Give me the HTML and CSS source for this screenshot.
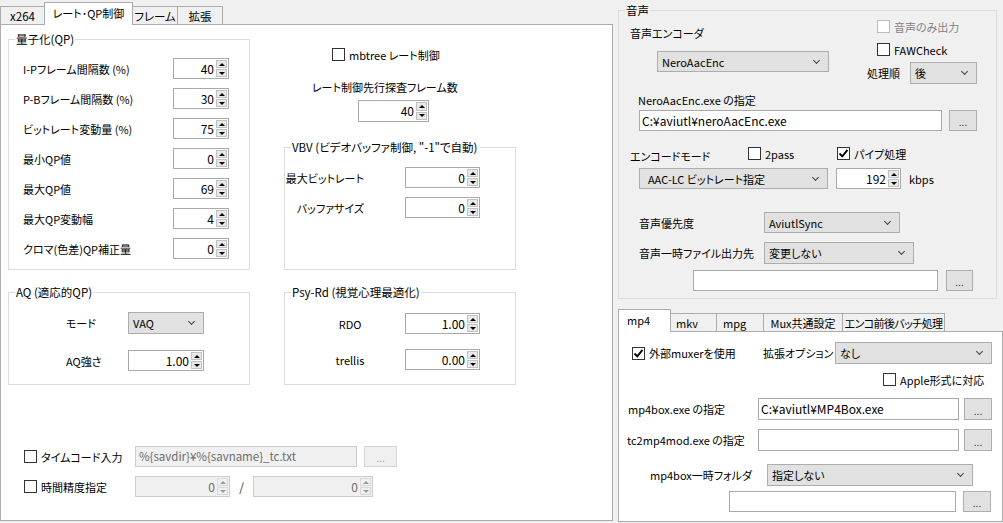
FILE: index.html
```html
<!DOCTYPE html>
<html lang="ja">
<head>
<meta charset="utf-8">
<title>x264 settings</title>
<link rel="stylesheet" href="styles.css">
</head>
<body>
<div class="root">
  <div class="left">
    <div class="tabstrip">
      <div class="tab t1">x264</div>
      <div class="tab sel t2">レート･QP制御</div>
      <div class="tab t3">フレーム</div>
      <div class="tab t4">拡張</div>
    </div>
    <div class="panel lp">
      <div class="cols">
        <div class="col1">
          <div class="group quant">
            <div class="legend">量子化(QP)</div>
            <div class="qrows">
              <div class="qrow"><span>I-Pフレーム間隔数 (%)</span><div class="spin"><span class="val">40</span><span class="arrows"><i class="up"></i><i class="dn"></i></span></div></div>
              <div class="qrow"><span>P-Bフレーム間隔数 (%)</span><div class="spin"><span class="val">30</span><span class="arrows"><i class="up"></i><i class="dn"></i></span></div></div>
              <div class="qrow"><span>ビットレート変動量 (%)</span><div class="spin"><span class="val">75</span><span class="arrows"><i class="up"></i><i class="dn"></i></span></div></div>
              <div class="qrow"><span>最小QP値</span><div class="spin"><span class="val">0</span><span class="arrows"><i class="up"></i><i class="dn"></i></span></div></div>
              <div class="qrow"><span>最大QP値</span><div class="spin"><span class="val">69</span><span class="arrows"><i class="up"></i><i class="dn"></i></span></div></div>
              <div class="qrow"><span>最大QP変動幅</span><div class="spin"><span class="val">4</span><span class="arrows"><i class="up"></i><i class="dn"></i></span></div></div>
              <div class="qrow"><span>クロマ(色差)QP補正量</span><div class="spin"><span class="val">0</span><span class="arrows"><i class="up"></i><i class="dn"></i></span></div></div>
            </div>
          </div>
          <div class="group aq">
            <div class="legend">AQ (適応的QP)</div>
            <div class="aqrows">
              <div class="aqrow"><span class="lbl">モード</span><div class="drop"><span>VAQ</span></div></div>
              <div class="aqrow"><span class="lbl">AQ強さ</span><div class="spin"><span class="val">1.00</span><span class="arrows"><i class="up"></i><i class="dn"></i></span></div></div>
            </div>
          </div>
        </div>
        <div class="col2">
          <div class="cb mbt"><span class="chk"></span><span>mbtree レート制御</span></div>
          <div class="la-lbl">レート制御先行探査フレーム数</div>
          <div class="spin la-spin"><span class="val">40</span><span class="arrows"><i class="up"></i><i class="dn"></i></span></div>
          <div class="group vbv">
            <div class="legend">VBV (ビデオバッファ制御, "-1"で自動)</div>
            <div class="vrows">
              <div class="vrow"><span class="lbl">最大ビットレート</span><div class="spin"><span class="val">0</span><span class="arrows"><i class="up"></i><i class="dn"></i></span></div></div>
              <div class="vrow"><span class="lbl">バッファサイズ</span><div class="spin"><span class="val">0</span><span class="arrows"><i class="up"></i><i class="dn"></i></span></div></div>
            </div>
          </div>
          <div class="group psy">
            <div class="legend">Psy-Rd (視覚心理最適化)</div>
            <div class="prows">
              <div class="prow"><span class="lbl">RDO</span><div class="spin"><span class="val">1.00</span><span class="arrows"><i class="up"></i><i class="dn"></i></span></div></div>
              <div class="prow"><span class="lbl">trellis</span><div class="spin"><span class="val">0.00</span><span class="arrows"><i class="up"></i><i class="dn"></i></span></div></div>
            </div>
          </div>
        </div>
      </div>
      <div class="bottom">
        <div class="brow">
          <div class="cb bck"><span class="chk"></span><span>タイムコード入力</span></div>
          <div class="tin dis tc">%{savdir}¥%{savname}_tc.txt</div>
          <div class="btn dis tcb">...</div>
        </div>
        <div class="brow">
          <div class="cb bck"><span class="chk"></span><span>時間精度指定</span></div>
          <div class="spin dis s1"><span class="val">0</span><span class="arrows"><i class="up"></i><i class="dn"></i></span></div>
          <span class="slash">/</span>
          <div class="spin dis s2"><span class="val">0</span><span class="arrows"><i class="up"></i><i class="dn"></i></span></div>
        </div>
      </div>
    </div>
  </div>

  <div class="right">
    <div class="group audio">
      <div class="legend">音声</div>
      <div class="arow">
        <div class="acolL">
          <div class="lbl enc-lbl">音声エンコーダ</div>
          <div class="drop enc-drop"><span>NeroAacEnc</span></div>
        </div>
        <div class="acolR">
          <div class="cb ck1 disabled"><span class="chk"></span><span>音声のみ出力</span></div>
          <div class="cb ck2"><span class="chk"></span><span>FAWCheck</span></div>
          <div class="order"><span class="lbl">処理順</span><div class="drop"><span>後</span></div></div>
        </div>
      </div>
      <div class="exe-lbl">NeroAacEnc.exe の指定</div>
      <div class="line exe-row">
        <div class="tin exe-in">C:¥aviutl¥neroAacEnc.exe</div>
        <div class="btn exe-btn">...</div>
      </div>
      <div class="line mode-row">
        <span class="lbl mode-lbl">エンコードモード</span>
        <div class="cb pass"><span class="chk"></span><span>2pass</span></div>
        <div class="cb"><span class="chk"><svg width="11" height="11" viewBox="0 0 11 11"><path d="M1.5 5.5 L4.3 8.3 L9.5 1.8" fill="none" stroke="#000" stroke-width="1.9"/></svg></span><span>パイプ処理</span></div>
      </div>
      <div class="line br-row">
        <div class="drop br-drop"><span>AAC-LC ビットレート指定</span></div>
        <div class="spin br-spin"><span class="val">192</span><span class="arrows"><i class="up"></i><i class="dn"></i></span></div>
        <span class="kbps">kbps</span>
      </div>
      <div class="line pri-row">
        <span class="lbl plbl">音声優先度</span>
        <div class="drop pri-drop"><span>AviutlSync</span></div>
      </div>
      <div class="line tmp-row">
        <span class="lbl plbl">音声一時ファイル出力先</span>
        <div class="drop tmp-drop"><span>変更しない</span></div>
      </div>
      <div class="line tmp2-row">
        <div class="tin tmp-in"></div>
        <div class="btn tmp-btn">...</div>
      </div>
    </div>

    <div class="tabstrip tabstrip2">
      <div class="tab sel r1">mp4</div>
      <div class="tab r2">mkv</div>
      <div class="tab r3">mpg</div>
      <div class="tab r4">Mux共通設定</div>
      <div class="tab r5">エンコ前後バッチ処理</div>
    </div>
    <div class="panel rp">
      <div class="line m1">
        <div class="cb mux"><span class="chk"><svg width="11" height="11" viewBox="0 0 11 11"><path d="M1.5 5.5 L4.3 8.3 L9.5 1.8" fill="none" stroke="#000" stroke-width="1.9"/></svg></span><span>外部muxerを使用</span></div>
        <span class="lbl ext-lbl">拡張オプション</span>
        <div class="drop ext-drop"><span>なし</span></div>
      </div>
      <div class="cb m2"><span class="chk"></span><span>Apple形式に対応</span></div>
      <div class="line m3">
        <span class="lbl pl1">mp4box.exe の指定</span>
        <div class="tin pin">C:¥aviutl¥MP4Box.exe</div>
        <div class="btn pbtn">...</div>
      </div>
      <div class="line m4">
        <span class="lbl pl2">tc2mp4mod.exe の指定</span>
        <div class="tin pin"></div>
        <div class="btn pbtn">...</div>
      </div>
      <div class="line m5">
        <span class="lbl pl3">mp4box一時フォルダ</span>
        <div class="drop fold-drop"><span>指定しない</span></div>
      </div>
      <div class="line m6">
        <div class="tin fin"></div>
        <div class="btn fbtn">...</div>
      </div>
    </div>
  </div>
</div>
</body>
</html>
```

FILE: styles.css
```css
* { box-sizing: border-box; margin: 0; padding: 0; }
html, body { width: 1003px; height: 523px; overflow: hidden; }
body {
  background: #f0f0f0;
  font-family: "Noto Sans CJK JP", "Noto Sans", sans-serif;
  font-size: 11px;
  line-height: 16px;
  color: #000;
  font-feature-settings: "palt";
}
.root { display: flex; }
.left { width: 613px; }

/* tabs */
.tabstrip { display: flex; align-items: flex-end; height: 24px; }
.tab {
  height: 18px;
  border: 1px solid #acacac;
  border-bottom: none;
  background: #f0f0f0;
  display: flex; align-items: center; justify-content: center;
  margin-left: -1px;
  white-space: nowrap;
  font-size: 11.5px;
}
.tab:first-child { margin-left: 0; }
.tab.sel { height: 23px; background: #fff; margin-bottom: -1px; position: relative; z-index: 1; padding-bottom: 2px; }
.t1 { width: 45px; }
.t2 { width: 89px; font-size: 11px; }
.t3 { width: 46px; }
.t4 { width: 46px; }

.panel { background: #fff; border: 1px solid #acacac; }
.lp { height: 497px; }

.cols { display: flex; padding-left: 7px; }
.col1 { width: 242px; display: flex; flex-direction: column; }
.col2 { width: 232px; margin-left: 34px; display: flex; flex-direction: column; }

.group { border: 1px solid #dcdcdc; }
.legend {
  margin: -8px 0 0 6px;
  padding: 0 1px;
  background: #fff;
  width: fit-content;
  height: 15px;
  line-height: 15px;
  white-space: nowrap;
  font-size: 11.5px;
}

/* spin box */
.spin { height: 21px; border: 1px solid #a9a9a9; background: #fff; display: flex; flex: none; font-size: 12px; }
.spin .val { flex: 1; text-align: right; line-height: 19px; padding-right: 1px; }
.arrows { width: 11px; display: flex; flex-direction: column; margin: 1px; gap: 1px; }
.arrows i { flex: 1; background: #e8e8e8; border: 1px solid #c2c2c2; display: flex; align-items: center; justify-content: center; }
.arrows i::after { content: ""; border-left: 3px solid transparent; border-right: 3px solid transparent; }
.arrows .up::after { border-bottom: 3px solid #000; }
.arrows .dn::after { border-top: 3px solid #000; }
.spin.dis { background: #f0f0f0; border-color: #cccccc; color: #6d6d6d; }
.spin.dis .arrows i { background: #f0f0f0; border-color: #d9d9d9; }
.spin.dis .arrows .up::after { border-bottom-color: #9a9a9a; }
.spin.dis .arrows .dn::after { border-top-color: #9a9a9a; }

/* dropdown */
.drop {
  height: 21px; border: 1px solid #adadad; background: #e1e1e1;
  display: flex; align-items: center; padding-left: 4px; flex: none; white-space: nowrap;
  font-size: 11px;
}
.drop::after {
  content: ""; margin-left: auto; margin-right: 9px; margin-top: -3px;
  width: 4px; height: 4px;
  border-right: 1.6px solid #404040; border-bottom: 1.6px solid #404040;
  transform: rotate(45deg);
}

/* text input / button */
.tin { height: 21px; border: 1px solid #a9a9a9; background: #fff; padding-left: 2px; line-height: 19px; flex: none; white-space: nowrap; overflow: hidden; font-size: 12px; }
.tin.dis { background: #f0f0f0; border-color: #cccccc; color: #6d6d6d; font-size: 11.5px; }
.btn { height: 21px; border: 1px solid #adadad; background: #e1e1e1; display: flex; align-items: center; justify-content: center; flex: none; color: #333; font-size: 10px; padding-top: 3px; }
.btn.dis { background: #f0f0f0; border-color: #d4d4d4; color: #a0a0a0; }

/* checkbox */
.cb { display: flex; align-items: center; gap: 4px; white-space: nowrap; }
.chk { width: 13px; height: 13px; border: 1px solid #333; background: #fff; flex: none; display: flex; align-items: center; justify-content: center; }
.cb.disabled { color: #838383; }
.cb.disabled .chk { border-color: #bcbcbc; }

/* quantization */
.quant { margin-top: 14px; height: 231px; }
.qrows { padding-top: 11px; display: flex; flex-direction: column; gap: 9px; }
.qrow { display: flex; align-items: center; height: 21px; padding-left: 14px; white-space: nowrap; }
.qrow .spin { margin-left: auto; margin-right: 20px; width: 56px; }

/* AQ */
.aq { margin-top: 22px; height: 93px; }
.aqrows { padding-top: 12px; }
.aqrow { display: flex; align-items: center; padding-left: 57px; height: 21px; }
.aqrow:first-child { height: 22px; }
.aqrow + .aqrow { margin-top: 16px; }
.aqrow .lbl { width: 62px; }
.aq .drop { width: 76px; height: 22px; }
.aq .spin { width: 76px; }

/* middle column */
.mbt { margin-top: 23px; margin-left: 48px; height: 13px; }
.la-lbl { margin-top: 18px; margin-left: 28px; white-space: nowrap; }
.la-spin { margin-top: 5px; margin-left: 74px; width: 71px; height: 22px; }
.vbv { margin-top: 25px; height: 123px; }
.vrows { padding-top: 12px; display: flex; flex-direction: column; gap: 9px; }
.vrow { display: flex; align-items: center; height: 21px; }
.vrow .lbl { width: 79px; text-align: right; white-space: nowrap; }
.vrow .spin { margin-left: 41px; width: 75px; }
.psy { margin-top: 22px; height: 93px; }
.prows { padding-top: 13px; display: flex; flex-direction: column; gap: 15px; }
.prow { display: flex; align-items: center; height: 21px; }
.prow .lbl { width: 110px; margin-left: 10px; text-align: center; }
.prow .spin { width: 75px; }

/* bottom */
.bottom { margin-top: 61px; padding-left: 23px; display: flex; flex-direction: column; gap: 9px; }
.brow { display: flex; align-items: center; height: 21px; }
.bck { width: 111px; }
.tc { width: 222px; padding-left: 3px; }
.tcb { margin-left: 7px; width: 33px; }
.s1 { width: 95px; }
.slash { width: 23px; text-align: center; color: #333; font-size: 12px; }
.s2 { width: 120px; }

/* right */
.right { margin-left: 5px; width: 385px; }
.audio { margin-top: 10px; width: 379px; height: 289px; background: #f0f0f0; }
.audio .legend { background: #f0f0f0; }
.line { display: flex; align-items: center; white-space: nowrap; }
.arow { display: flex; height: 66px; }
.acolL { width: 248px; padding-left: 11px; }
.enc-lbl { margin-top: 7px; }
.enc-drop { margin-top: 10px; margin-left: 27px; width: 172px; }
.acolR { display: flex; flex-direction: column; }
.ck1 { margin-top: 2px; margin-left: 10px; height: 13px; }
.ck2 { margin-top: 10px; margin-left: 10px; height: 13px; }
.order { margin-top: 6px; display: flex; align-items: center; height: 22px; }
.order .lbl { width: 43px; }
.order .drop { width: 67px; height: 22px; }
.exe-lbl { margin-top: 8px; margin-left: 19px; }
.exe-row { margin-top: 2px; height: 21px; }
.exe-in { margin-left: 20px; width: 303px; }
.exe-btn { margin-left: 7px; width: 28px; }
.mode-row { margin-top: 16px; height: 18px; align-items: flex-start; }
.mode-lbl { margin-left: 11px; width: 118px; margin-top: 1px; }
.mode-row .cb { height: 13px; }
.pass { width: 89px; }
.br-row { margin-top: 3px; height: 21px; }
.br-drop { margin-left: 20px; width: 189px; padding-left: 8px; }
.br-spin { margin-left: 8px; width: 65px; }
.kbps { margin-left: 8px; }
.pri-row { margin-top: 23px; height: 21px; }
.plbl { margin-left: 20px; width: 125px; }
.pri-drop { width: 136px; }
.tmp-row { margin-top: 9px; height: 22px; }
.tmp-drop { width: 150px; height: 22px; }
.tmp2-row { margin-top: 6px; height: 21px; }
.tmp-in { margin-left: 74px; width: 245px; }
.tmp-btn { margin-left: 8px; width: 27px; }

.tabstrip2 { margin-top: 10px; height: 22px; }
.tabstrip2 .tab { font-size: 11px; }
.r1 { width: 53px; justify-content: flex-start; padding-left: 8px; }
.r2 { width: 47px; justify-content: flex-start; padding-left: 5px; }
.r3 { width: 48px; justify-content: flex-start; padding-left: 6px; }
.r4 { width: 80px; }
.r5 { width: 103px; letter-spacing: -0.6px; }
.rp { height: 191px; width: 385px; }
.m1 { margin-top: 10px; height: 22px; }
.mux { margin-left: 13px; width: 131px; }
.ext-lbl { width: 72px; }
.ext-drop { width: 157px; height: 22px; }
.m2 { margin-top: 9px; margin-left: 264px; height: 13px; }
.m3 { margin-top: 12px; height: 22px; }
.m4 { margin-top: 9px; height: 22px; }
.pl1 { margin-left: 9px; width: 130px; }
.pl2 { margin-left: 8px; width: 131px; }
.pin { width: 201px; height: 22px; line-height: 20px; }
.pbtn { margin-left: 5px; width: 28px; height: 22px; }
.m5 { margin-top: 13px; height: 22px; }
.pl3 { margin-left: 31px; width: 117px; }
.fold-drop { width: 206px; height: 22px; }
.m6 { margin-top: 5px; height: 21px; }
.fin { margin-left: 110px; width: 227px; }
.fbtn { margin-left: 7px; width: 28px; }
```
